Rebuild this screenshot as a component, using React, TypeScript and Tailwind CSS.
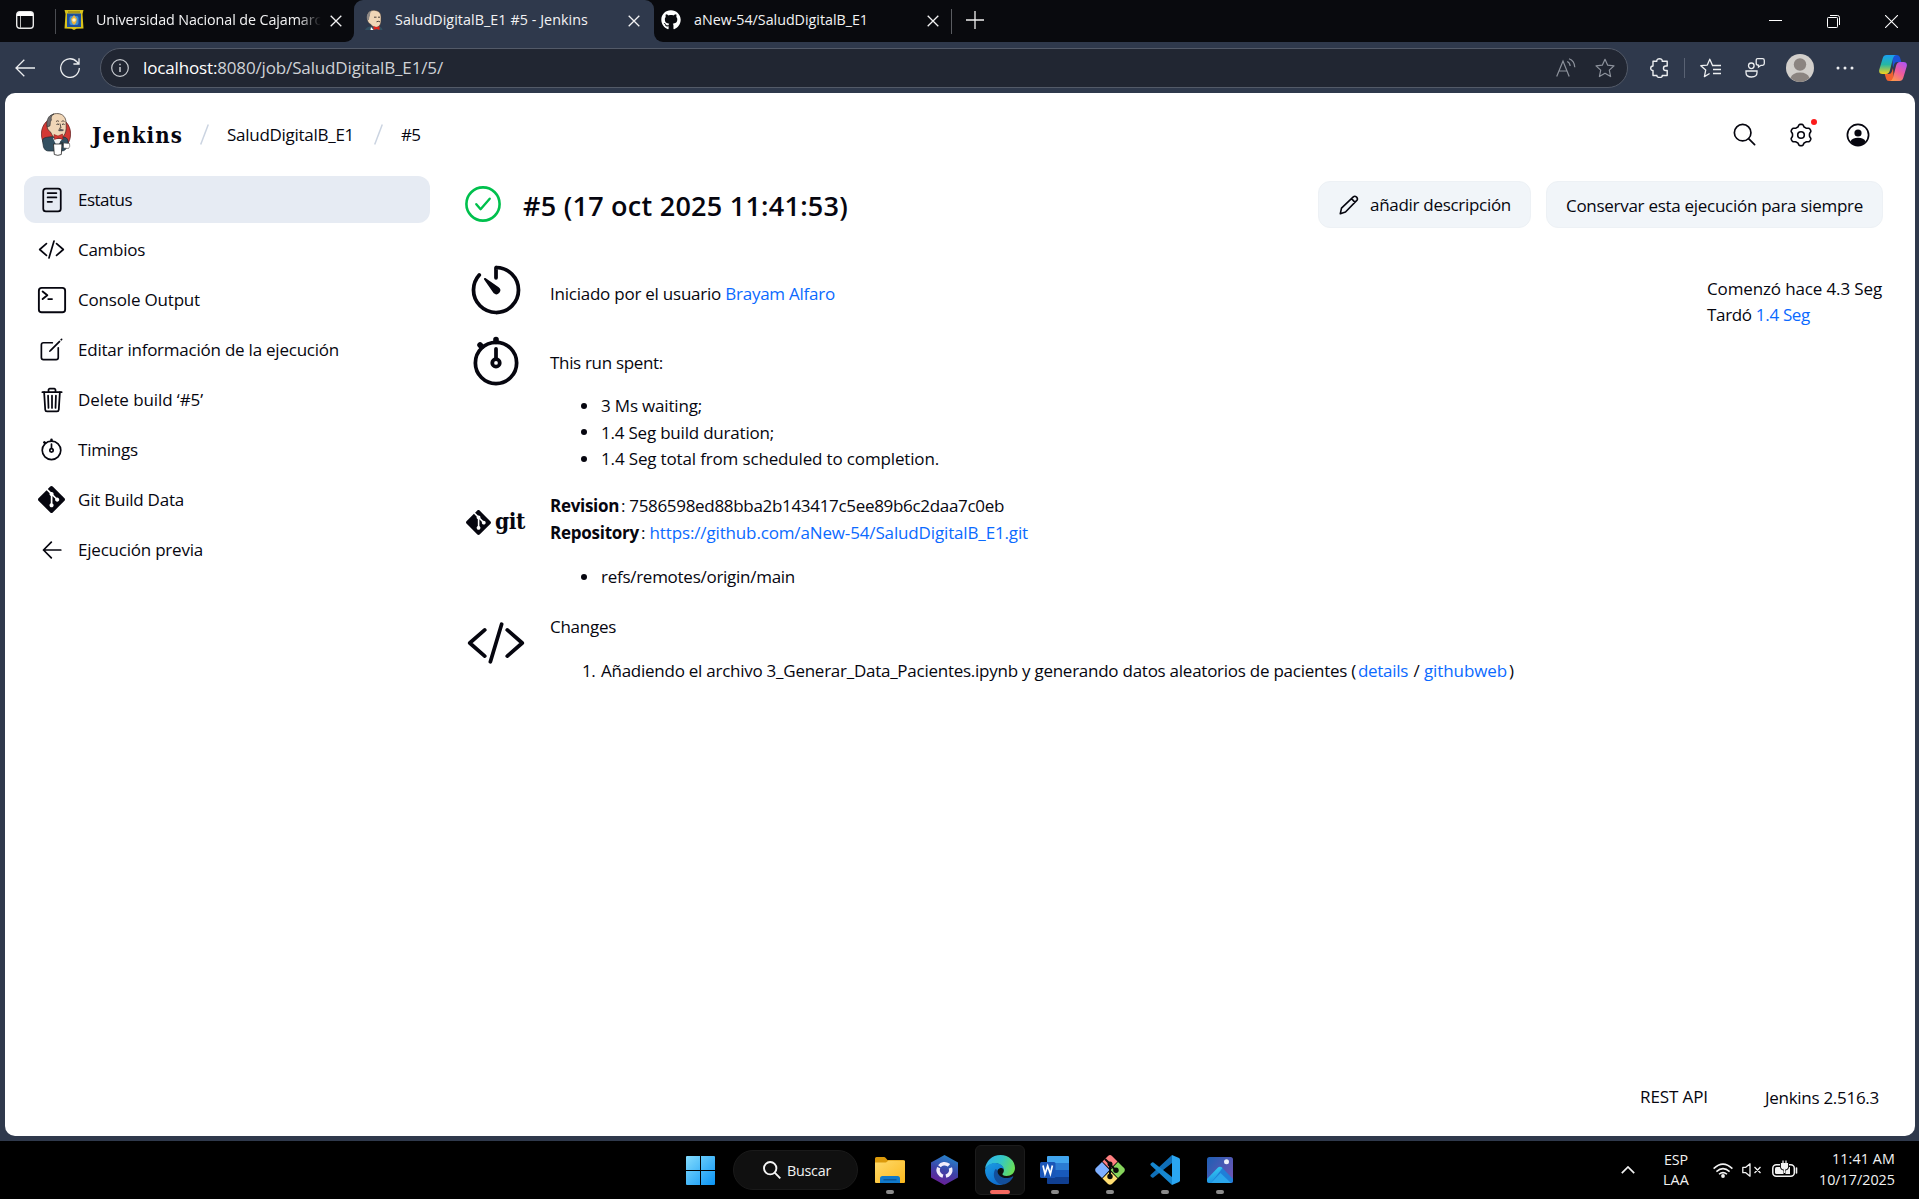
import { useLayoutEffect, useRef, useState, type ReactNode } from "react";
import {
  IoCodeSlashOutline,
  IoCreateOutline,
  IoReaderOutline,
  IoSearchOutline,
  IoStopwatchOutline,
  IoTerminalOutline,
  IoTimerOutline,
  IoTrashOutline,
} from "react-icons/io5";
import { SiGit } from "react-icons/si";
import { FaGithub } from "react-icons/fa";

/** One line of text whose tracking is adjusted so that it fills `w` pixels. */
function Fit({ w, className = "", children }: { w: number; className?: string; children: ReactNode }) {
  const ref = useRef<HTMLSpanElement>(null);
  const [spacing, setSpacing] = useState(0);
  useLayoutEffect(() => {
    const el = ref.current;
    if (!el) return;
    const count = (el.textContent ?? "").length || 1;
    setSpacing((w - el.getBoundingClientRect().width) / count);
  }, [w]);
  return (
    <span ref={ref} className={`inline-block shrink-0 px-px whitespace-pre ${className}`} style={{ letterSpacing: `${spacing}px` }}>
      {children}
    </span>
  );
}

function Butler({ className = "" }: { className?: string }) {
  return (
    <svg viewBox="0 0 30 43" className={className}>
      <ellipse cx="15" cy="21" rx="14.6" ry="16.5" fill="#d33833" stroke="#5b1b1b" strokeWidth=".7" />
      <path d="M8 24c-4 .5-6.500 1-6.500 4l1 6c1 3 3 4 5 4h13c3 0 5-2 6-5 1-4 1-7-2-8.500L19 23z" fill="#335061" stroke="#1d2a33" strokeWidth=".7" />
      <path d="M12 25l4 9 5-8z" fill="#f4f4f4" />
      <path d="M8 6C9 1.500 13 .4 17 .6c5 .3 8 4 8 9 .3 4 .5 8-1 11-1 3-4 5-7 5-4 0-6-3-7-6C8 18 6 16 6 13z" fill="#f0d6b7" stroke="#3a2f2a" strokeWidth=".7" />
      <path d="M6.500 14C5 11 6 5 9 2.700l4-1.800c-3 2-3 4-2.500 6-1.500 1.500-1 4-1.500 6z" fill="#6d6b6d" stroke="#222" strokeWidth=".5" />
      <path d="M15 8.500q2-1.500 3 0M20.500 8.500q1.500-1.500 3 0M19 10.500l1 4.500-2 .4" fill="none" stroke="#3a2f2a" strokeWidth=".8" />
      <path d="M15.500 11.500q1.500-1 2.500 0M21 11.500q1.500-1 2.500 0" fill="none" stroke="#222" strokeWidth=".9" />
      <path d="M17 17q2-2 6-.3-.5 2-3 1.300-2 1-3-1z" fill="#5b5558" />
      <path d="M13 21.500l4 1.500 4.500-2 .5 5.500-4.500-1.500-4 1.500z" fill="#d33833" stroke="#81120f" strokeWidth=".5" />
      <path d="M12.500 31h8.500l-.7 10.500q-3.500 1.700-7 0z" fill="#fff" stroke="#222" strokeWidth=".8" />
      <path d="M22.500 30l6 .5q1 3-1 5l-5-.5z" fill="#fff" stroke="#444" strokeWidth=".6" />
      <path d="M19 28.500l3 1.500-1 2.500" fill="none" stroke="#222" strokeWidth=".6" />
    </svg>
  );
}

function ButlerHead({ className = "" }: { className?: string }) {
  return (
    <svg viewBox="0 0 18 20" className={className}>
      <path d="M0 20q1-3 5-3.500h9q3 .5 3.500 3.500z" fill="#335061" />
      <path d="M2.500 5C4 1 7 .2 10 .4c4 .3 6 3 6 6.600 0 5 0 7-2 9-2 2-6 1.800-8-1.500C3 13 1.500 10 2.500 5z" fill="#f0d6b7" stroke="#4a3d35" strokeWidth=".5" />
      <path d="M2.300 10C1 6 2.500 2 6.500.8 5 3 5 4 5 6 4 7 4.300 8 4 10z" fill="#8c8785" />
      <path d="M9 7.200h2.500M13 7.200h2M11.500 11.800q1.800-1 3.500 0" stroke="#3a2f2a" strokeWidth=".9" fill="none" />
      <path d="M8.500 16l3 1.200 3-1.200v4l-3-1-3 1z" fill="#e2231a" />
      <path d="M6 17l2.500 3h-3z" fill="#fff" />
    </svg>
  );
}

function Cross({ className = "" }: { className?: string }) {
  return (
    <svg viewBox="0 0 12 12" className={className} fill="none" stroke="currentColor" strokeWidth="1.300">
      <path d="M.7.7l10.600 10.600M11.300.7L.7 11.300" />
    </svg>
  );
}

function TitleBar() {
  return (
    <div className="flex h-[42px] bg-[#2f394c] text-[14.3px] text-[#f3f3f4]">
      <div className="flex w-[354px] items-start rounded-br-[9px] bg-[#090a0e] pl-4">
        <svg viewBox="0 0 18 18" className="mt-[11px] size-[18px]">
          <rect x=".7" y=".7" width="16.600" height="16.600" rx="3" fill="none" stroke="#e8e8e8" strokeWidth="1.400" />
          <path d="M1 5V3.500Q1 1 3.500 1h11Q17 1 17 3.500V5z" fill="#fff" />
          <path d="M4.500 5v12" stroke="#bbb" strokeWidth="1" />
        </svg>
        <div className="mt-[9px] ml-[21px] h-[25px] w-px bg-[#4b4d52]" />
        <svg viewBox="0 0 20 20" className="mt-[10px] ml-2 size-5">
          <path d="M.5 0h19l-1 4 1 14.500-7 .3-2.500 1.200-2.500-1.200-7-.3L1.500 4z" fill="#d9c21b" />
          <rect x="3" y="3.500" width="14" height="13.500" fill="#1d4f9e" />
          <rect x="5.500" y="6" width="9" height="9" rx="2" fill="#3f8fd2" />
          <path d="M10 5l3 4-1 4-2 2-2-2-1-4z" fill="#f0b53a" />
          <circle cx="10" cy="10" r="1.800" fill="#fff2c8" />
          <path d="M4 2h12" stroke="#7a6a12" strokeWidth="1" />
        </svg>
        <div className="ml-[11px] h-10 w-[226px] overflow-hidden mask-r-from-90% mask-r-to-100% leading-10">
          <Fit w={235}>Universidad Nacional de Cajamarca</Fit>
        </div>
        <Cross className="mt-[15px] ml-[9px] size-3" />
      </div>
      <div className="w-[300px] bg-[#090a0e]">
        <div className="flex h-full items-start rounded-t-[9px] bg-[#2f394c] pl-[11px]">
          <ButlerHead className="mt-[10px] h-5 w-[18px]" />
          <Fit w={195} className="ml-[11px] leading-10">SaludDigitalB_E1 #5 - Jenkins</Fit>
          <Cross className="mt-[15px] ml-[39px] size-3" />
        </div>
      </div>
      <div className="flex flex-1 items-start rounded-bl-[9px] bg-[#090a0e] pl-[7px]">
        <FaGithub className="mt-[10px] size-[20px] text-white" />
        <Fit w={176} className="ml-[12px] leading-10">aNew-54/SaludDigitalB_E1</Fit>
        <Cross className="mt-[15px] ml-[58px] size-3" />
        <div className="mt-[9px] ml-3 h-[25px] w-px bg-[#5a5c61]" />
        <svg viewBox="0 0 18 18" className="mt-[11px] ml-[14px] size-[18px]" fill="none" stroke="#f0f0f0" strokeWidth="1.300">
          <path d="M9 0v18M0 9h18" />
        </svg>
        <div className="flex-1" />
        <div className="mt-[20px] mr-[45px] h-px w-[13px] bg-white" />
        <svg viewBox="0 0 13 13" className="mt-[15px] mr-[45px] size-[13px]" fill="none" stroke="#fff" strokeWidth="1">
          <rect x=".5" y="2.500" width="10" height="10" rx=".8" />
          <path d="M3 .5h7.500q2 0 2 2V10" />
        </svg>
        <svg viewBox="0 0 13 13" className="mt-[15px] mr-[21px] size-[13px]" fill="none" stroke="#fff" strokeWidth="1.100">
          <path d="M0 0l13 13M13 0L0 13" />
        </svg>
      </div>
    </div>
  );
}

const starPath = "M10 1l2.700 5.900 6.300.7-4.700 4.300 1.300 6.400L10 15.100l-5.600 3.200 1.300-6.400L1 7.600l6.300-.7z";

function CopilotIcon() {
  return (
    <svg viewBox="0 0 28 26" className="h-[26px] w-7">
      <defs>
        <linearGradient id="cpA" x1="0" y1="0" x2="0" y2="1">
          <stop offset="0" stopColor="#1aa0f2" />
          <stop offset=".5" stopColor="#26b7a4" />
          <stop offset="1" stopColor="#f5d21c" />
        </linearGradient>
        <linearGradient id="cpB" x1=".8" y1="0" x2=".2" y2="1">
          <stop offset="0" stopColor="#b055f0" />
          <stop offset=".5" stopColor="#ef5b9c" />
          <stop offset="1" stopColor="#fd9a4b" />
        </linearGradient>
      </defs>
      <path d="M13 0h5q2.300 0 3 2.500l1.300 4.500h-4q-2.300 0-3 2L14 13z" fill="#1b53d8" />
      <path d="M15 26h-5q-2.300 0-3-2.500L5.700 19h4q2.300 0 3-2l1.300-4z" fill="#f0622f" />
      <path d="M7.500 0H17q-2.200.6-3 3.200L11 15q-1 4-4 4H3.500Q-.7 19 .3 14.500L3.700 3.200Q4.700 0 7.500 0z" fill="url(#cpA)" />
      <path d="M20.500 26H11q2.200-.6 3-3.200L17 11q1-4 4-4h3.500q4.200 0 3.200 4.500l-3.400 11.300q-1 3.200-3.800 3.200z" fill="url(#cpB)" />
    </svg>
  );
}

function Toolbar() {
  return (
    <div className="flex h-[51px] items-center bg-[#2f394c] pl-[15px] text-[#eceef0]">
      <svg viewBox="0 0 20 18" className="h-[18px] w-5" fill="none" stroke="currentColor" strokeWidth="1.300">
        <path d="M20 9H1M9.300.8L1 9l8.300 8.200" />
      </svg>
      <svg viewBox="0 0 20 20" className="ml-[25px] size-5" fill="none" stroke="currentColor" strokeWidth="1.300">
        <path d="M19.300 10A9.300 9.300 0 1 1 16.800 3.700L19 6M19 .3V6h-5.600" />
      </svg>
      <div className="ml-5 flex h-10 w-[1528px] items-center rounded-full border border-[#535a68] bg-[#212632] pl-[10px] text-[#e3e5e8]">
        <svg viewBox="0 0 18 18" className="size-[18px]" fill="none" stroke="#c9ccd1" strokeWidth="1.200">
          <circle cx="9" cy="9" r="8.300" />
          <path d="M9 8v5M9 4.800v1.500" strokeWidth="1.500" />
        </svg>
        <Fit w={302} className="ml-[13px] text-[17px] leading-9">
          <span className="text-white">localhost:</span>
          <span className="text-[#cfd2d7]">8080/job/SaludDigitalB_E1/5/</span>
        </Fit>
        <div className="flex-1" />
        <svg viewBox="0 0 20 19" className="h-[19px] w-5" fill="none" stroke="#8d929c" strokeWidth="1.200">
          <path d="M.7 18.500L7 3l6.200 15.500M2.800 13h8.400M11.200 3.500q2.600 1 3 4.500M13 .7q5.500 2 5.800 8.600" />
        </svg>
        <svg viewBox="0 0 20 19.500" className="mr-[12px] ml-[19px] size-5" fill="none" stroke="#8d929c" strokeWidth="1.200" strokeLinejoin="round">
          <path d={starPath} />
        </svg>
      </div>
      <svg viewBox="0 0 20 20" className="ml-[22px] size-5" fill="none" stroke="currentColor" strokeWidth="1.400" strokeLinejoin="round">
        <path d="M3 3.200h3.800C6.600 1.500 8 .7 9.500.7s3 .8 2.700 2.500h5V8h-1.500c-3 0-3 4.500 0 4.500h1.500v5h-5c.3 1.400-1 2-2.500 2s-3-.6-2.800-2H3v-5C1.500 12.600.7 11.500.7 10.300S1.500 8 3 8z" />
      </svg>
      <div className="ml-[14px] h-5 w-px bg-[#596273]" />
      <svg viewBox="0 0 21 20" className="ml-[15px] h-5 w-[21px]" fill="none" stroke="currentColor" strokeWidth="1.300" strokeLinejoin="round">
        <path d="M13 7.300l-.7-.2L9.800 1.200 7.300 7.100.8 7.700l4.900 4.400-1.300 6.500 5.200-3.100M12 7.500h9M13 11.500h8M13 15.500h8" />
      </svg>
      <svg viewBox="0 0 20 20" className="ml-[24px] size-5" fill="none" stroke="currentColor" strokeWidth="1.300">
        <circle cx="6.300" cy="7.800" r="2.800" />
        <path d="M1 13h11v1.500q0 4.500-5.500 4.500T1 14.500zM12.500.7h5q1.800 0 1.800 1.800v3q0 1.800-1.800 1.800H16L13.500 9V7.200q-2.300 0-2.300-2V2.500q0-1.800 1.300-1.800z" />
      </svg>
      <svg viewBox="0 0 28 28" className="ml-[21px] size-7">
        <circle cx="14" cy="14" r="14" fill="#d2cfcb" />
        <circle cx="14" cy="10.500" r="6.200" fill="#8b8480" />
        <path d="M4.500 24q2-5.500 9.500-5.500t9.500 5.500Q19 28 14 28t-9.500-4z" fill="#8b8480" />
      </svg>
      <svg viewBox="0 0 18 4" className="ml-[22px] h-1 w-[18px]" fill="currentColor">
        <circle cx="2" cy="2" r="1.500" />
        <circle cx="9" cy="2" r="1.500" />
        <circle cx="16" cy="2" r="1.500" />
      </svg>
      <div className="ml-[25px]">
        <CopilotIcon />
      </div>
    </div>
  );
}

const gearPath =
  Array.from({ length: 73 }, (_, i) => {
    const a = (i / 72) * Math.PI * 2;
    const wave = Math.cos(6 * (a - Math.PI / 2));
    const r = 9.600 + 1.15 * Math.tanh(2 * wave);
    return `${i ? "L" : "M"}${(12 + r * Math.cos(a)).toFixed(2)} ${(12 + r * Math.sin(a)).toFixed(2)}`;
  }).join("") + "z";

function Slash({ className = "" }: { className?: string }) {
  return (
    <svg viewBox="0 0 9 21" className={`h-[21px] w-[9px] ${className}`}>
      <path d="M.7 20.500L8.300.5" stroke="#cbd4e1" strokeWidth="1.500" />
    </svg>
  );
}

function PageHeader() {
  return (
    <div className="flex h-[83px] items-center pl-9">
      <Butler className="h-[43px] w-[30px]" />
      <Fit w={93} className="ml-5 font-['DejaVu_Serif'] text-[22px] leading-8 font-bold [font-stretch:condensed]">Jenkins</Fit>
      <Slash className="ml-4" />
      <Fit w={129} className="ml-[17px]">SaludDigitalB_E1</Fit>
      <Slash className="ml-[19px]" />
      <Fit w={21} className="ml-[17px]">#5</Fit>
      <div className="flex-1" />
      <IoSearchOutline className="size-[27px]" />
      <div className="relative ml-[31px]">
        <svg viewBox="0 0 24 24" className="size-6" fill="none" stroke="currentColor" strokeWidth="1.600" strokeLinejoin="round">
          <path d={gearPath} />
          <circle cx="12" cy="12" r="3.300" />
        </svg>
        <div className="absolute -top-[4px] -right-[4px] size-[6px] rounded-full bg-[#fb1b1b]" />
      </div>
      <svg viewBox="0 0 24 24" className="mr-[45px] ml-[33px] size-6">
        <circle cx="12" cy="12" r="10.600" fill="none" stroke="currentColor" strokeWidth="1.700" />
        <circle cx="12" cy="10" r="3.600" fill="currentColor" />
        <path d="M4.500 18.500Q6 14.800 12 14.800t7.500 3.700Q17 22.700 12 22.700t-7.500-4.200z" fill="currentColor" />
      </svg>
    </div>
  );
}

const backArrow = (
  <svg viewBox="0 0 20 18" className="h-[18px] w-5" fill="none" stroke="currentColor" strokeWidth="1.700" strokeLinecap="round" strokeLinejoin="round">
    <path d="M18.800 9H1.500M9.300 1.200L1.500 9l7.800 7.800" />
  </svg>
);

const menu = [
  { label: "Estatus", w: 56, icon: <IoReaderOutline className="size-[28px]" /> },
  { label: "Cambios", w: 69, icon: <IoCodeSlashOutline className="size-[27px]" /> },
  { label: "Console Output", w: 124, icon: <IoTerminalOutline className="size-[30px]" /> },
  { label: "Editar información de la ejecución", w: 263, icon: <IoCreateOutline className="size-[27px]" /> },
  { label: "Delete build ‘#5’", w: 127, icon: <IoTrashOutline className="size-[28px]" /> },
  { label: "Timings", w: 62, icon: <IoStopwatchOutline className="size-[27px]" /> },
  { label: "Git Build Data", w: 108, icon: <SiGit className="size-[27px]" /> },
  { label: "Ejecución previa", w: 127, icon: backArrow },
];

function Sidebar() {
  return (
    <nav className="flex w-[406px] flex-col gap-[3px]">
      {menu.map((item, i) => (
        <div key={item.label} className={`flex h-[47px] items-center rounded-xl pl-3 ${i === 0 ? "bg-[#e6ebf3]" : ""}`}>
          <span className="flex w-[31px] justify-center">{item.icon}</span>
          <Fit w={item.w} className="ml-[10px]">{item.label}</Fit>
        </div>
      ))}
    </nav>
  );
}

function Bullet() {
  return <span className="mr-[13px] ml-[32px] size-[6px] rounded-full bg-[#06060f]" />;
}

function Anchor({ children }: { children: ReactNode }) {
  return <a className="text-[#0b6aff]">{children}</a>;
}

function BuildPage() {
  return (
    <main className="ml-[35px] flex flex-1 flex-col pr-8">
      <div className="mt-[5px] flex h-[47px] items-center">
        <svg viewBox="0 0 36 36" className="-mt-px size-9" fill="none" stroke="#00c04d">
          <circle cx="18" cy="18" r="16.600" strokeWidth="2.600" />
          <path d="M11.300 18.200l4.300 5 9.100-10.500" strokeWidth="2.400" strokeLinecap="round" strokeLinejoin="round" />
        </svg>
        <Fit w={327} className="mt-[2px] ml-[21px] text-[27px] leading-9 font-semibold">#5 (17 oct 2025 11:41:53)</Fit>
        <div className="flex-1" />
        <div className="flex h-[47px] w-[213px] items-center rounded-xl border border-[#edf1f5] bg-[#f1f5f9] pl-[20px]">
          <svg viewBox="0 0 20 20" className="size-5" fill="none" stroke="currentColor" strokeWidth="1.600" strokeLinejoin="round">
            <path d="M1.300 18.700l1.200-5.500L14.300 1.800q1.500-1.300 3.300.3 1.600 1.700.2 3.300L6.500 17zM12.500 3.600l3.500 3.800" />
          </svg>
          <Fit w={143} className="ml-[10px]">añadir descripción</Fit>
        </div>
        <div className="ml-[15px] flex h-[47px] w-[337px] items-center justify-center rounded-xl border border-[#edf1f5] bg-[#f1f5f9]">
          <Fit w={299} className="mt-[3px]">Conservar esta ejecución para siempre</Fit>
        </div>
      </div>

      <div className="mt-[32px] flex justify-between">
        <div className="pl-px">
          <div className="flex h-[68px] items-start">
            <IoTimerOutline className="size-[60px]" />
            <div className="flex pt-[20px] pl-[23px] leading-[27px]">
              <Fit w={287}>
                Iniciado por el usuario <Anchor>Brayam Alfaro</Anchor>
              </Fit>
            </div>
          </div>
          <div className="flex h-[165px] items-start">
            <IoStopwatchOutline className="mt-[3px] size-[60px]" />
            <div className="pt-[21px] pl-[23px] leading-[27px]">
              <Fit w={115}>This run spent:</Fit>
              <div className="mt-[16px]">
                <div className="flex h-[27px] items-center"><Bullet /><Fit w={103}>3 Ms waiting;</Fit></div>
                <div className="flex h-[26px] items-center"><Bullet /><Fit w={175}>1.4 Seg build duration;</Fit></div>
                <div className="flex h-[27px] items-center"><Bullet /><Fit w={340}>1.4 Seg total from scheduled to completion.</Fit></div>
              </div>
            </div>
          </div>
          <div className="flex h-[118px] items-start">
            <div className="mt-[17px] flex w-[60px] items-center">
              <SiGit className="size-[25px] shrink-0" />
              <Fit w={32} className="-mt-1 ml-[3px] font-['DejaVu_Serif'] text-[22.5px] leading-7 font-bold [font-stretch:condensed]">git</Fit>
            </div>
            <div className="pl-[23px] leading-[26px]">
              <div className="flex h-[27px]">
                <Fit w={71} className="font-bold">Revision</Fit>
                <Fit w={385}>: 7586598ed88bba2b143417c5ee89b6c2daa7c0eb</Fit>
              </div>
              <div className="flex h-[26px]">
                <Fit w={91} className="font-bold">Repository</Fit>
                <Fit w={389}>: <Anchor>https://github.com/aNew-54/SaludDigitalB_E1.git</Anchor></Fit>
              </div>
              <div className="mt-[17px] flex h-[27px] items-center"><Bullet /><Fit w={196}>refs/remotes/origin/main</Fit></div>
            </div>
          </div>
          <div className="flex items-start">
            <IoCodeSlashOutline className="mt-[2px] size-[60px]" />
            <div className="pl-[23px] leading-[27px]">
              <Fit w={68} className="mt-[2px]">Changes</Fit>
              <div className="mt-[17px] flex">
                <Fit w={19} className="ml-[32px]">1. </Fit>
                <Fit w={757}>Añadiendo el archivo 3_Generar_Data_Pacientes.ipynb y generando datos aleatorios de pacientes (</Fit>
                <Fit w={52}><Anchor>details</Anchor></Fit>
                <Fit w={14}> / </Fit>
                <Fit w={85}><Anchor>githubweb</Anchor></Fit>
                <Fit w={6}>)</Fit>
              </div>
            </div>
          </div>
        </div>
        <div className="flex w-[177px] flex-col items-start pt-[16px] leading-[26px]">
          <Fit w={177}>Comenzó hace 4.3 Seg</Fit>
          <Fit w={105}>Tardó <Anchor>1.4 Seg</Anchor></Fit>
        </div>
      </div>
    </main>
  );
}

function WordIcon() {
  return (
    <svg viewBox="0 0 29 28" className="h-7 w-[29px]">
      <path d="M7 1q0-1 1-1h20q1 0 1 1v6.500H7z" fill="#41a5ee" />
      <path d="M7 7h22v7H7z" fill="#2b7cd3" />
      <path d="M7 14h22v7H7z" fill="#185abd" />
      <path d="M7 21h22v6q0 1-1 1H8q-1 0-1-1z" fill="#103f91" />
      <rect y="6" width="15.500" height="16" rx="1.500" fill="#1a56b8" />
      <path d="M3 9.500l2 8.500 2.700-8 2.700 8 2-8.500" fill="none" stroke="#fff" strokeWidth="1.700" />
    </svg>
  );
}

function EdgeIcon() {
  return (
    <svg viewBox="0 0 30 30" className="size-[30px]">
      <defs>
        <linearGradient id="edTop" x1="0" y1=".3" x2="1" y2=".6">
          <stop offset="0" stopColor="#2fb4ee" />
          <stop offset=".5" stopColor="#35c8c4" />
          <stop offset="1" stopColor="#6be052" />
        </linearGradient>
        <linearGradient id="edLow" x1="0" y1="0" x2=".5" y2="1">
          <stop offset="0" stopColor="#1b9de2" />
          <stop offset="1" stopColor="#0f6fd0" />
        </linearGradient>
      </defs>
      <path d="M0 14C1 6 7 0 15.500 0 24 0 30 6 30 13c0 5-4 8-8.500 8-3 0-4.500-1.300-4-2.300 1-1 1.500-2.300 1.300-4C18 11 15 8.500 11 8.500 6 8.500 2 10.500 0 14z" fill="url(#edTop)" />
      <path d="M0 15C1 10.500 5.500 8 10.500 8c4.500 0 8.300 3 8.500 6.500-1.500-2.300-4.500-2-6 0-3 4.500-.5 11.500 5 13 1 1.500-1 2.500-3 2.500C6 30 0 23 0 15z" fill="url(#edLow)" />
      <path d="M10.500 14c-3.500 5-1.500 13 5.500 15.700 5.500 0 10-3.200 12.200-7.700.3-.7-.2-1-.8-.6C21 25 12 22.500 12.500 15z" fill="#134f9b" />
    </svg>
  );
}

const gitTiles = (
  <svg viewBox="0 0 30 30" className="size-[30px]">
    <path d="M15 0q1 0 2 1l5.500 5.500-7.500 7.500-7.500-7.500L13 1q1-1 2-1z" fill="#ff7f80" />
    <path d="M7 7l7.500 8L7 23l-6.300-6.300q-1-1.700 0-3.400z" fill="#7fb0ff" />
    <path d="M23 7l-7.500 8 7.500 8 6.300-6.300q1-1.700 0-3.400z" fill="#86d45c" />
    <path d="M15 16l7.500 7.500L17 29q-2 1.500-4 0l-5.500-5.500z" fill="#ffde72" />
    <path d="M10 4l5 5v12.500M15 9.500l5.500 5.500" fill="none" stroke="#090909" strokeWidth="2" />
    <circle cx="15" cy="9" r="2.500" fill="#090909" />
    <circle cx="15" cy="21.500" r="2.700" fill="#090909" />
    <circle cx="21" cy="15.200" r="2.700" fill="#090909" />
  </svg>
);

const apps = [
  {
    name: "files",
    icon: (
      <svg viewBox="0 0 30 27" className="h-[27px] w-[30px]">
        <defs>
          <linearGradient id="fold" x1="0" y1="0" x2="1" y2="1">
            <stop offset="0" stopColor="#ffda6b" />
            <stop offset="1" stopColor="#fbb81d" />
          </linearGradient>
        </defs>
        <path d="M0 1.500Q0 0 1.500 0H9q1 0 1.500.8L12.500 3H28q2 0 2 2v5H0z" fill="#dc9a0b" />
        <path d="M0 5.500h11l2.500-2H29q1 0 1 1V25q0 1-1 1H1q-1 0-1-1z" fill="url(#fold)" />
        <path d="M5 26v-4.500Q5 19 7.500 19h15q2.500 0 2.500 2.500V26z" fill="#1079ca" />
        <path d="M8.500 22.800h13" stroke="#0a4f8d" strokeWidth="1.200" />
      </svg>
    ),
    mark: "bg-[#8b8b8b]",
  },
  {
    name: "hex",
    icon: (
      <svg viewBox="0 0 27 30" className="h-[30px] w-[27px]">
        <defs>
          <linearGradient id="hex" x1=".6" y1="0" x2=".3" y2="1">
            <stop offset="0" stopColor="#2684cb" />
            <stop offset=".5" stopColor="#3c43a8" />
            <stop offset="1" stopColor="#6d1b96" />
          </linearGradient>
        </defs>
        <path d="M13.500 0L27 7.500v15L13.500 30 0 22.500v-15z" fill="url(#hex)" />
        <circle cx="13.500" cy="15" r="6.300" fill="none" stroke="#f3eefc" strokeWidth="3.400" strokeDasharray="10.400 2.800" transform="rotate(-143 13.500 15)" />
      </svg>
    ),
    mark: "",
  },
  { name: "edge", icon: <EdgeIcon />, mark: "bg-[#f4685f]", active: true },
  { name: "word", icon: <WordIcon />, mark: "bg-[#8b8b8b]" },
  { name: "git", icon: gitTiles, mark: "bg-[#8b8b8b]" },
  {
    name: "code",
    icon: (
      <svg viewBox="0 0 30 30" className="size-[30px]">
        <path d="M1 19.500L22 0v8L3.500 22.500q-.8.500-1.500 0l-1.500-1.300q-.5-.8.500-1.700z" fill="#0f6fb8" />
        <path d="M1 10.500L22 30v-8L3.500 7.500Q2.700 7 2 7.500L.5 8.800q-.5.800.5 1.700z" fill="#1687cf" />
        <path d="M22 0l7 3q1 .5 1 1.700v20.600q0 1.200-1 1.700l-7 3z" fill="#2aa6f2" />
      </svg>
    ),
    mark: "bg-[#8b8b8b]",
  },
  {
    name: "photos",
    icon: (
      <svg viewBox="0 0 26 26" className="size-[26px]">
        <defs>
          <linearGradient id="phBg" x1="0" y1="0" x2="1" y2=".7">
            <stop offset="0" stopColor="#1d5fb4" />
            <stop offset="1" stopColor="#6a55b4" />
          </linearGradient>
          <linearGradient id="phHill" x1=".3" y1="0" x2=".6" y2="1">
            <stop offset="0" stopColor="#37d0f5" />
            <stop offset="1" stopColor="#1a8de0" />
          </linearGradient>
        </defs>
        <rect width="26" height="26" rx="2.500" fill="url(#phBg)" />
        <path d="M2 25.500l10-14.500q1.500-1.700 3.200-.2L26 22v1.500Q26 26 23.500 26H3z" fill="#1f7fd8" />
        <path d="M0 22l10.500-11q2.500-2.500 5 0L7 22l-3 4H2.500Q0 26 0 23.500z" fill="url(#phHill)" />
        <path d="M4 26l9.500-10 10.500 10z" fill="#2ba7ec" />
        <circle cx="19.500" cy="4.800" r="2.500" fill="#eff3fa" />
      </svg>
    ),
    mark: "bg-[#8b8b8b]",
  },
];

function Taskbar() {
  return (
    <div className="flex h-[58px] bg-black text-[14.3px] text-[#f2f2f2]">
      <svg viewBox="0 0 29 29" className="mt-[15px] ml-[686px] size-[29px] shrink-0">
        <defs>
          <linearGradient id="win" x1="0" y1="0" x2="29" y2="29" gradientUnits="userSpaceOnUse">
            <stop offset="0" stopColor="#84dcfd" />
            <stop offset="1" stopColor="#0a94f5" />
          </linearGradient>
        </defs>
        <path d="M0 1q0-1 1-1h13v14H0zM15 0h13q1 0 1 1v13H15zM0 15h14v14H1q-1 0-1-1zM15 15h14v13q0 1-1 1H15z" fill="url(#win)" />
      </svg>
      <div className="mt-[9px] ml-[18px] flex h-10 w-[125px] shrink-0 items-center rounded-full border border-[#1a1a1a] bg-[#101010] pl-[29px]">
        <svg viewBox="0 0 18 18" className="size-[18px]" fill="none" stroke="#f5f5f5" strokeWidth="1.900">
          <circle cx="7.200" cy="7.200" r="6.200" />
          <path d="M11.700 11.700L17.300 17.300" />
        </svg>
        <Fit w={46} className="mt-px ml-[5px]">Buscar</Fit>
      </div>
      <div className="ml-1 flex shrink-0">
        {apps.map((app) => (
          <div key={app.name} className="flex h-[58px] w-[55px] justify-center pt-1">
            <div className={`flex h-[50px] w-[50px] flex-col items-center rounded-md ${app.active ? "border border-[#1c1c1c] bg-[#101010]" : "border border-transparent"}`}>
              <div className="flex h-[44px] items-center pt-[4px]">{app.icon}</div>
              <div className={`h-1 rounded-full ${app.active ? "w-5" : "w-2"} ${app.mark}`} />
            </div>
          </div>
        ))}
      </div>
      <div className="flex-1" />
      <svg viewBox="0 0 14 8" className="mt-[25px] h-2 w-[14px] shrink-0" fill="none" stroke="#f2f2f2" strokeWidth="1.700">
        <path d="M.8 7.200L7 1l6.200 6.200" />
      </svg>
      <div className="mt-[9px] ml-[27px] flex w-[28px] flex-col items-center leading-5">
        <Fit w={26}>ESP</Fit>
        <Fit w={28}>LAA</Fit>
      </div>
      <svg viewBox="0 0 20 15" className="mt-[22px] ml-[23px] h-[15px] w-5 shrink-0" fill="none" stroke="#f2f2f2" strokeWidth="1.500">
        <path d="M.6 5.600q9.400-9 18.800 0M3.400 8.600q6.600-6 13.200 0M6 11.300q4-3.400 8 0" />
        <circle cx="10" cy="13" r="1.900" fill="#f2f2f2" stroke="none" />
      </svg>
      <svg viewBox="0 0 20 14" className="mt-[22px] ml-[9px] h-[14px] w-5 shrink-0" fill="none" stroke="#f2f2f2" strokeWidth="1.300" strokeLinejoin="round">
        <path d="M.8 4.300h3L8 .8v12.400L3.800 9.700h-3zM12.500 4l6 6M18.500 4l-6 6" />
      </svg>
      <svg viewBox="0 0 26 17" className="mt-[19px] ml-[10px] h-[17px] w-[26px] shrink-0">
        <rect x=".8" y="4.800" width="21.500" height="11.400" rx="3.500" fill="none" stroke="#f2f2f2" strokeWidth="1.500" />
        <path d="M24.500 8v5" stroke="#f2f2f2" strokeWidth="1.600" strokeLinecap="round" />
        <path d="M3 8.500Q3 7 4.500 7H18v7H4.500Q3 14 3 12.500z" fill="#f2f2f2" />
        <path d="M8 2.500h9v4q0 3.500-3.500 4V14h-2v-3.500Q8 10 8 6.500z" fill="#000" />
        <path d="M9.500 3.500h6v3q0 2.500-3 2.500t-3-2.500zM11 .5V3M14 .5V3M12.500 9v4" fill="#f2f2f2" stroke="#f2f2f2" strokeWidth="1.200" />
      </svg>
      <div className="mt-[8px] mr-[23px] ml-[19px] flex w-[79px] flex-col items-end leading-[20.5px]">
        <Fit w={65}>11:41 AM</Fit>
        <Fit w={78}>10/17/2025</Fit>
      </div>
    </div>
  );
}

export default function App() {
  return (
    <div className="flex h-[1199px] w-[1919px] flex-col overflow-hidden bg-[#2f394c] font-['Open_Sans',sans-serif]">
      <TitleBar />
      <Toolbar />
      <div className="mx-[5px] mr-[4px] mb-[5px] flex flex-1 flex-col rounded-[10px] bg-white text-[17px] text-[#06060f]">
        <PageHeader />
        <div className="flex pl-[19px]">
          <Sidebar />
          <BuildPage />
        </div>
        <div className="flex-1" />
        <footer className="mb-[25px] flex justify-end pr-[35px] leading-[26px]">
          <Fit w={70} className="mr-[55px]">REST API</Fit>
          <Fit w={116} className="mt-px">Jenkins 2.516.3</Fit>
        </footer>
      </div>
      <Taskbar />
    </div>
  );
}
